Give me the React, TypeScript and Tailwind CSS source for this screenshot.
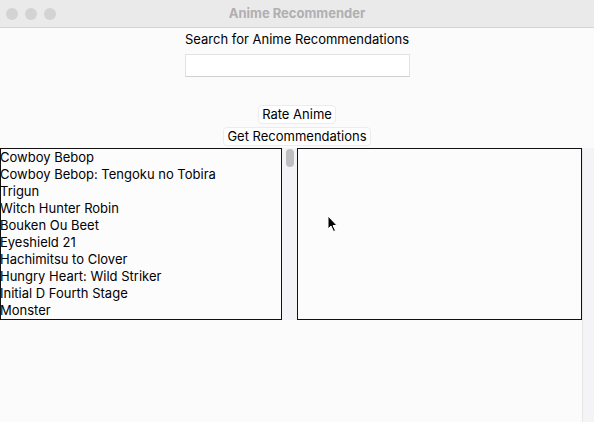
import React from 'react';

const animeList = [
    'Cowboy Bebop',
    'Cowboy Bebop: Tengoku no Tobira',
    'Trigun',
    'Witch Hunter Robin',
    'Bouken Ou Beet',
    'Eyeshield 21',
    'Hachimitsu to Clover',
    'Hungry Heart: Wild Striker',
    'Initial D Fourth Stage',
    'Monster',
];

function TitleBar() {
    return (
        <div className="grid grid-cols-[1fr_auto_1fr] items-center h-[28px] bg-[#ebeaeb] border-b border-[#d6d5d6]">
            <div className="flex items-center gap-[7px] pl-[6px]">
                <span className="w-[12px] h-[12px] rounded-full bg-[#d3d2d4]" />
                <span className="w-[12px] h-[12px] rounded-full bg-[#d3d2d4]" />
                <span className="w-[12px] h-[12px] rounded-full bg-[#d3d2d4]" />
            </div>
            <div className="text-[13px] font-bold text-[#b0afb1]">Anime Recommender</div>
            <div />
        </div>
    );
}

function Cursor() {
    return (
        <svg className="absolute left-[327px] top-[215px]" width="12" height="18" viewBox="0 0 12 18">
            <path d="M1 1 L1 14 L4 11 L6.5 16.5 L8.5 15.5 L6 10.5 L10 10.5 Z" fill="#000" stroke="#fff" strokeWidth="1" />
        </svg>
    );
}

export default function App() {
    return (
        <div
            className="relative w-[594px] h-[422px] overflow-hidden bg-[#fcfbfc] flex flex-col text-black"
            style={{ fontFamily: 'Inter, "Liberation Sans", sans-serif' }}
        >
            <TitleBar />

            <div className="flex flex-col items-center">
                <div className="mt-[3px] text-[13px] leading-[16px]">Search for Anime Recommendations</div>
                <input
                    className="mt-[7px] w-[225px] h-[23px] bg-white border border-[#e2e1e3] border-b-[#cfcfd0] outline-none"
                    type="text"
                />
                <button className="mt-[28px] h-[19px] px-[3px] text-[13px] leading-[17px] bg-white rounded-[4px] border border-[#ececec]">
                    Rate Anime
                </button>
                <button className="mt-[3px] h-[19px] px-[3px] text-[13px] leading-[17px] bg-white rounded-[4px] border border-[#ececec]">
                    Get Recommendations
                </button>
            </div>

            <div className="flex flex-1 mt-[2px]">
                <div className="w-[582px] flex items-start">
                    <div className="w-[282px] h-[172px] border border-[#111] bg-[#fdfcfd] overflow-hidden">
                        <ul className="text-[13px] leading-[17px] -ml-[1px]">
                            {animeList.map((name) => (
                                <li key={name} className="whitespace-nowrap">{name}</li>
                            ))}
                        </ul>
                    </div>
                    <div className="w-[15px] h-[172px] bg-[#f3f2f4] flex justify-center pt-[1px]">
                        <div className="w-[8px] h-[18px] rounded-full bg-[#bebdbf]" />
                    </div>
                    <div className="w-[285px] h-[172px] border border-[#111] bg-[#fdfcfd]" />
                </div>
                <div className="w-[12px] bg-[#f4f3f5] border-l border-[#e6e5e7]" />
            </div>

            <Cursor />
        </div>
    );
}
